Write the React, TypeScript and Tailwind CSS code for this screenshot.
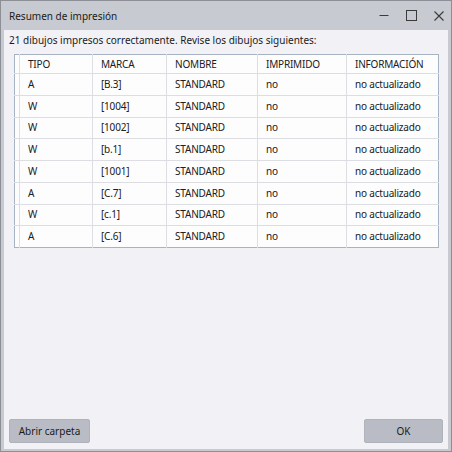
import React from 'react';

const rows = [
  ['A', '[B.3]'],
  ['W', '[1004]'],
  ['W', '[1002]'],
  ['W', '[b.1]'],
  ['W', '[1001]'],
  ['A', '[C.7]'],
  ['W', '[c.1]'],
  ['A', '[C.6]'],
];

const font = { fontFamily: '"Noto Sans", "Open Sans", sans-serif' };

function TitleBar() {
  return (
    <div className="h-[29px] flex items-center justify-between pl-[8px] pr-[7px] text-[10px] text-[#1b1b1b]">
      <span className="pt-[1px]">Resumen de impresión</span>
      <div className="flex items-center gap-[17px] text-[#3a3a3a]">
        <svg width="10" height="10" viewBox="0 0 10 10">
          <path d="M0.5 4.5 H9.5" stroke="currentColor" strokeWidth="1" />
        </svg>
        <svg width="11" height="11" viewBox="0 0 11 11">
          <rect x="0.5" y="0.5" width="10" height="10" fill="none" stroke="currentColor" strokeWidth="1" />
        </svg>
        <svg width="10" height="10" viewBox="0 0 10 10">
          <path d="M0.5 0.5 L9.5 9.5 M9.5 0.5 L0.5 9.5" stroke="currentColor" strokeWidth="1.1" />
        </svg>
      </div>
    </div>
  );
}

function ResultTable() {
  const cell = 'pl-[8px] border-l border-[#dcdee4] text-left font-normal';
  return (
    <table className="table-fixed border-collapse w-[424px] bg-[#fdfdfe] border border-[#a7b2c3] text-[10px] tracking-[-0.2px] text-[#202020]">
      <colgroup>
        <col className="w-[5px]" />
        <col className="w-[73px]" />
        <col className="w-[74px]" />
        <col className="w-[91px]" />
        <col className="w-[89px]" />
        <col className="w-[92px]" />
      </colgroup>
      <thead>
        <tr className="h-[19px] border-b border-[#dcdee4]">
          <th />
          <th className={cell}>TIPO</th>
          <th className={cell}>MARCA</th>
          <th className={cell}>NOMBRE</th>
          <th className={cell}>IMPRIMIDO</th>
          <th className={cell}>INFORMACIÓN</th>
        </tr>
      </thead>
      <tbody>
        {rows.map(([tipo, marca], i) => (
          <tr key={i} className="h-[21.75px] border-b border-[#dcdee4] last:border-b-0">
            <td />
            <td className={cell}>{tipo}</td>
            <td className={cell}>{marca}</td>
            <td className={cell}>STANDARD</td>
            <td className={cell}>no</td>
            <td className={cell}>no actualizado</td>
          </tr>
        ))}
      </tbody>
    </table>
  );
}

export default function App() {
  return (
    <div
      className="w-[452px] h-[452px] border border-[#8c8f95] bg-[#c7cad0] flex flex-col"
      style={font}
    >
      <TitleBar />
      <div className="flex-1 mx-[3px] mb-[2px] bg-[#f2f1f6] flex flex-col">
        <div className="pl-[5px] pt-[3px] h-[24px] text-[10px] text-[#1b1b1b]">
          21 dibujos impresos correctamente. Revise los dibujos siguientes:
        </div>
        <div className="px-[10px]">
          <ResultTable />
        </div>
        <div className="flex-1" />
        <div className="flex justify-between px-[5px] pb-[6px] text-[10px] text-[#1b1b1b]">
          <button className="w-[81px] h-[24px] bg-[#b9bcc4] border border-[#b0b3bb] rounded-[2px]">
            Abrir carpeta
          </button>
          <button className="w-[79px] h-[24px] bg-[#b9bcc4] border border-[#b0b3bb] rounded-[2px]">
            OK
          </button>
        </div>
      </div>
    </div>
  );
}
